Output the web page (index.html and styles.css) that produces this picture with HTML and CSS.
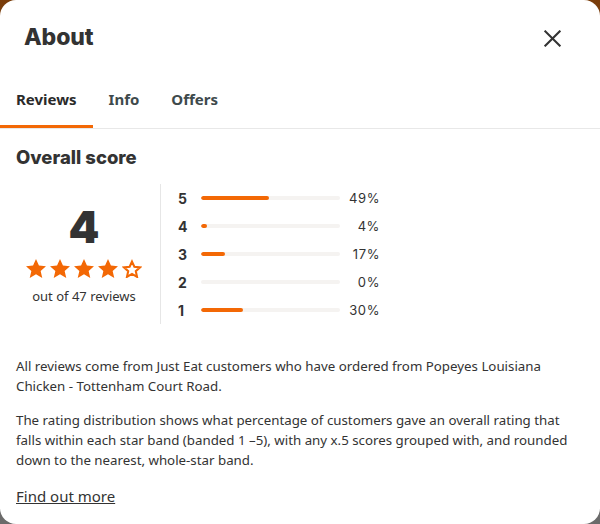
FILE: index.html
```html
<!DOCTYPE html>
<html lang="en">
<head>
<meta charset="utf-8">
<title>About</title>
<link rel="stylesheet" href="styles.css">
</head>
<body>
<div class="modal">
  <div class="header">
    <h1 class="title">About</h1>
    <button class="close" aria-label="Close">
      <svg width="17" height="17" viewBox="0 0 18 18"><path d="M1.5 1.5 L16.5 16.5 M16.5 1.5 L1.5 16.5" stroke="#333" stroke-width="2.2" stroke-linecap="square" fill="none"/></svg>
    </button>
  </div>
  <div class="tabs">
    <div class="tab active">Reviews</div>
    <div class="tab">Info</div>
    <div class="tab">Offers</div>
  </div>
  <div class="content">
    <h2 class="section-title">Overall score</h2>
    <div class="score">
      <div class="summary">
        <div class="big">4</div>
        <div class="stars">
          <svg class="star" viewBox="1.5 1.5 21 20"><path d="M12 1.5l3.1 6.9 7.4.7-5.6 5 1.7 7.4L12 17.6l-6.6 3.9 1.7-7.4-5.6-5 7.4-.7z" fill="#f36805"/></svg>
          <svg class="star" viewBox="1.5 1.5 21 20"><path d="M12 1.5l3.1 6.9 7.4.7-5.6 5 1.7 7.4L12 17.6l-6.6 3.9 1.7-7.4-5.6-5 7.4-.7z" fill="#f36805"/></svg>
          <svg class="star" viewBox="1.5 1.5 21 20"><path d="M12 1.5l3.1 6.9 7.4.7-5.6 5 1.7 7.4L12 17.6l-6.6 3.9 1.7-7.4-5.6-5 7.4-.7z" fill="#f36805"/></svg>
          <svg class="star" viewBox="1.5 1.5 21 20"><path d="M12 1.5l3.1 6.9 7.4.7-5.6 5 1.7 7.4L12 17.6l-6.6 3.9 1.7-7.4-5.6-5 7.4-.7z" fill="#f36805"/></svg>
          <svg class="star" viewBox="1.5 1.5 21 20"><path d="M12 4.2l2.5 5.5 6 .6-4.5 4 1.3 6L12 17.2l-5.3 3.1 1.3-6-4.5-4 6-.6z" fill="none" stroke="#f36805" stroke-width="2.2" stroke-linejoin="miter"/></svg>
        </div>
        <div class="count">out of 47 reviews</div>
      </div>
      <div class="dist">
        <div class="row"><span class="num">5</span><span class="track"><span class="fill" style="width:49%"></span></span><span class="pct">49%</span></div>
        <div class="row"><span class="num">4</span><span class="track"><span class="fill" style="width:4%"></span></span><span class="pct">4%</span></div>
        <div class="row"><span class="num">3</span><span class="track"><span class="fill" style="width:17%"></span></span><span class="pct">17%</span></div>
        <div class="row"><span class="num">2</span><span class="track"><span class="fill" style="width:0%"></span></span><span class="pct">0%</span></div>
        <div class="row"><span class="num">1</span><span class="track"><span class="fill" style="width:30%"></span></span><span class="pct">30%</span></div>
      </div>
    </div>
    <p class="text">All reviews come from Just Eat customers who have ordered from Popeyes Louisiana Chicken - Tottenham Court Road.</p>
    <p class="text">The rating distribution shows what percentage of customers gave an overall rating that falls within each star band (banded 1 –5), with any x.5 scores grouped with, and rounded down to the nearest, whole-star band.</p>
    <a class="link" href="#">Find out more</a>
  </div>
</div>
</body>
</html>
```

FILE: styles.css
```css
html, body {
  margin: 0;
  padding: 0;
}
body {
  width: 600px;
  height: 524px;
  background: linear-gradient(to bottom, #7a3d0a 0%, #6a5a4a 50%, #6b6b6b 100%);
  font-family: "Noto Sans", "Open Sans", sans-serif;
  color: #333;
}
.modal {
  width: 600px;
  height: 524px;
  background: #fff;
  border-radius: 16px;
  overflow: hidden;
  box-sizing: border-box;
}
.header {
  display: flex;
  justify-content: space-between;
  align-items: flex-start;
  padding: 23px 36px 0 24px;
}
.title {
  margin: 0;
  font-family: Inter, "Noto Sans", sans-serif;
  font-weight: 800;
  font-size: 23px;
  line-height: 28px;
  color: #333;
  letter-spacing: -0.1px;
}
.close {
  border: 0;
  background: none;
  padding: 0;
  width: 24px;
  height: 24px;
  margin-top: 3px;
  display: flex;
  align-items: center;
  justify-content: center;
  cursor: pointer;
}
.tabs {
  display: flex;
  margin-top: 25px;
  border-bottom: 1px solid #e8e8e8;
}
.tab {
  padding: 13px 16px 16px;
  font-family: "Noto Sans", sans-serif;
  font-weight: 700;
  font-size: 15px;
  line-height: 20px;
  color: #3e4a4c;
  border-bottom: 3px solid transparent;
}
.tab.active {
  color: #2a2a2a;
  border-bottom-color: #f36805;
}
.content {
  padding: 16px 16px 0;
}
.section-title {
  margin: 0;
  font-family: Inter, "Noto Sans", sans-serif;
  font-weight: 800;
  font-size: 18.5px;
  line-height: 24px;
  color: #333;
}
.score {
  display: flex;
  margin-top: 15px;
}
.summary {
  width: 136px;
  margin-right: 8px;
  display: flex;
  flex-direction: column;
  align-items: center;
  justify-content: center;
  box-sizing: border-box;
}
.big {
  font-family: Inter, sans-serif;
  font-weight: 900;
  font-size: 44px;
  line-height: 48px;
  color: #333;
}
.stars {
  display: flex;
  gap: 4px;
  margin-top: 8px;
}
.star {
  width: 20px;
  height: 19px;
  display: block;
}
.count {
  margin-top: 9px;
  font-size: 13px;
  line-height: 18px;
  color: #333;
}
.dist {
  border-left: 1px solid #e6e6e6;
  padding-left: 17px;
}
.row {
  display: flex;
  align-items: center;
  height: 28px;
  font-family: Inter, sans-serif;
}
.num {
  width: 23px;
  font-weight: 700;
  font-size: 14px;
  color: #333;
}
.track {
  width: 139px;
  height: 4px;
  border-radius: 2px;
  background: #f5f3f1;
  overflow: hidden;
  display: block;
}
.fill {
  display: block;
  height: 100%;
  background: #f36805;
  border-radius: 2px;
}
.pct {
  width: 40px;
  text-align: right;
  font-size: 13px;
  color: #333;
  letter-spacing: 0.6px;
}
.text {
  margin: 32px 0 0;
  font-size: 13.3px;
  line-height: 20px;
  color: #333;
}
.text + .text {
  margin-top: 14px;
}
.link {
  display: inline-block;
  margin-top: 16px;
  font-size: 15px;
  line-height: 20px;
  color: #333;
  text-decoration: underline;
}
```
